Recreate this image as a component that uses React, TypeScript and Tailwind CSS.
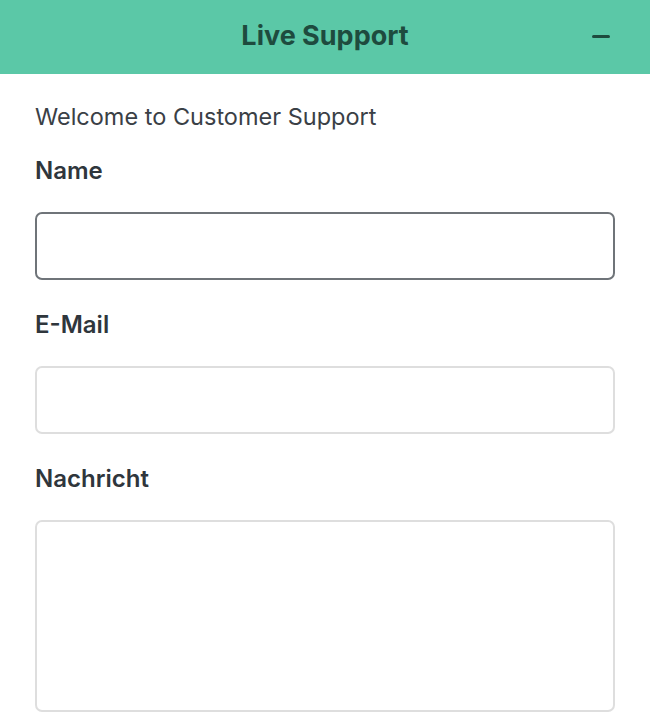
import React from 'react';

const App: React.FC = () => {
  return (
    <div className="min-h-[728px] w-[650px] bg-white font-['Inter',sans-serif]">
      {/* Header */}
      <div className="relative flex h-[74px] items-center justify-center bg-[#5bc8a7] pb-[3px]">
        <h1 className="text-[27px] font-bold leading-none text-[#1e4b3e]">Live Support</h1>
        <div className="absolute right-[40px] top-[35px] h-[3px] w-[18px] rounded-sm bg-[#1e4b3e]" />
      </div>

      {/* Form */}
      <div className="px-[35px] pt-[29px]">
        <p className="text-[23.5px] leading-[28px] text-[#3a4046]">Welcome to Customer Support</p>

        <label className="mt-[26px] block text-[24px] font-semibold leading-[28px] text-[#2f363c]">Name</label>
        <input
          type="text"
          className="mt-[27px] block h-[68px] w-full rounded-[7px] border-2 border-[#6f7479] bg-white outline-none"
        />

        <label className="mt-[31px] block text-[24px] font-semibold leading-[28px] text-[#2f363c]">E-Mail</label>
        <input
          type="text"
          className="mt-[27px] block h-[68px] w-full rounded-[7px] border-2 border-[#dedede] bg-white outline-none"
        />

        <label className="mt-[31px] block text-[24px] font-semibold leading-[28px] text-[#2f363c]">Nachricht</label>
        <textarea className="mt-[27px] block h-[192px] w-full resize-none rounded-[7px] border-2 border-[#dedede] bg-white outline-none" />
      </div>
    </div>
  );
};

export default App;
